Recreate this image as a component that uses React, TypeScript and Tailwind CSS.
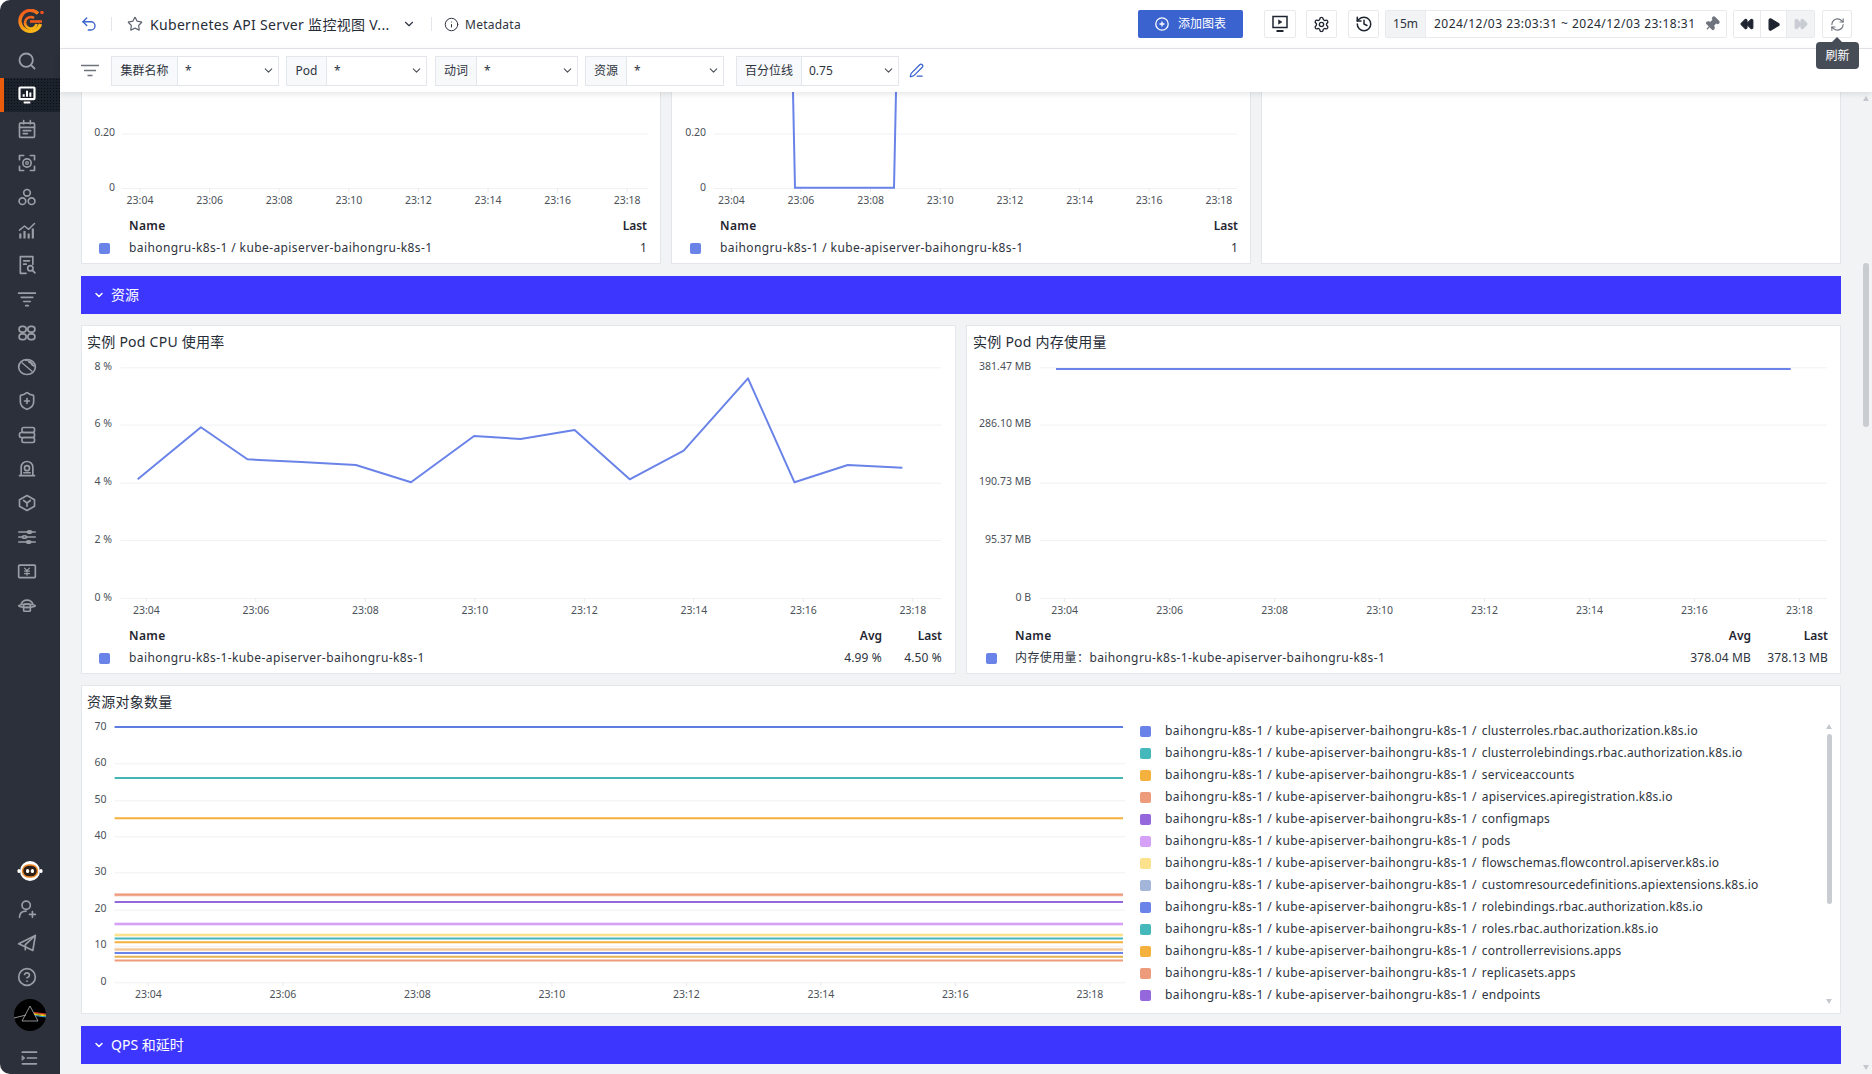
import { ChevronDown, CircleHelp, FastForward, History, Info, PenLine, Pin, Play, RefreshCw, Rewind, Search, Settings, ShieldPlus, Star, Undo2 } from "lucide-react";
import type { ReactNode } from "react";

const SERIES = "baihongru-k8s-1 / kube-apiserver-baihongru-k8s-1";

const RESOURCES = [
  ["bg-[#6a83e8]", "clusterroles.rbac.authorization.k8s.io"],
  ["bg-[#45b8bb]", "clusterrolebindings.rbac.authorization.k8s.io"],
  ["bg-[#f5b13d]", "serviceaccounts"],
  ["bg-[#ee9b7c]", "apiservices.apiregistration.k8s.io"],
  ["bg-[#9468dc]", "configmaps"],
  ["bg-[#d5a0f5]", "pods"],
  ["bg-[#fde28e]", "flowschemas.flowcontrol.apiserver.k8s.io"],
  ["bg-[#a3b5d8]", "customresourcedefinitions.apiextensions.k8s.io"],
  ["bg-[#6a83e8]", "rolebindings.rbac.authorization.k8s.io"],
  ["bg-[#45b8bb]", "roles.rbac.authorization.k8s.io"],
  ["bg-[#f5b13d]", "controllerrevisions.apps"],
  ["bg-[#ee9b7c]", "replicasets.apps"],
  ["bg-[#9468dc]", "endpoints"],
];

// resource chart lines: value, colour, soft halo
const RESOURCE_LINES: [number, string, boolean][] = [
  [70, "#5f7de0", false],
  [56, "#45b5b5", false],
  [45, "#f5b13d", false],
  [24, "#ee9b7c", true],
  [22, "#9468dc", false],
  [16, "#d5a0f5", true],
  [13, "#fde28e", true],
  [12, "#45b5c0", false],
  [11, "#f5b13d", false],
  [9, "#f3c79b", true],
  [8, "#6a83e8", false],
  [7, "#e6b24e", false],
  [6, "#ee9b7c", false],
];

const CPU_POINTS = [
  [118, 478], [228, 322], [309, 418], [403, 426], [498, 435], [594, 487], [704, 348], [785, 357],
  [879, 330], [975, 478], [1069, 392], [1181, 175], [1262, 487], [1355, 435], [1450, 443],
]
  .map(([x, y]) => `${(70 + x / 1.742).toFixed(1)},${(320 + y / 3).toFixed(1)}`)
  .join(" ");

const TIMES = ["23:04", "23:06", "23:08", "23:10", "23:12", "23:14", "23:16", "23:18"];

type AxisProps = {
  box: [number, number, number, number];
  gridFrom: number;
  gridTo: number;
  labelRight: number;
  rows: [number, string][];
  tick0: number;
  tickStep: number;
  labelY: number;
  children?: ReactNode;
};

function Axis({ box, gridFrom, gridTo, labelRight, rows, tick0, tickStep, labelY, children }: AxisProps) {
  const bottom = rows[rows.length - 1][0];
  return (
    <svg width={box[2]} height={box[3]} viewBox={box.join(" ")} className="shrink-0">
      {rows.map(([y, label]) => (
        <g key={label}>
          <line x1={gridFrom} x2={gridTo} y1={y + 0.5} y2={y + 0.5} stroke="#f0f1f3" />
          <text x={labelRight} y={y + 2.5} textAnchor="end" fontSize="10.5" fill="#4b5158">
            {label}
          </text>
        </g>
      ))}
      {TIMES.map((t, i) => {
        const x = tick0 + i * tickStep;
        return (
          <g key={t}>
            <line x1={x} x2={x} y1={bottom} y2={bottom + 4} stroke="#e8eaed" />
            <text x={x} y={labelY + 4} textAnchor="middle" fontSize="10.5" fill="#4b5158">
              {t}
            </text>
          </g>
        );
      })}
      {children}
    </svg>
  );
}

function LegendTable({ name, cols, pad, gap, colW }: { name: string; cols: [string, string][]; pad: string; gap: string; colW: string[] }) {
  return (
    <div className={`text-xs text-[#2e3440] ${pad}`}>
      <div className="flex h-[22px] items-center font-semibold text-[#1f2530]">
        <span className={`w-[11px] shrink-0 ${gap}`} />
        <span className="flex-1 tracking-[0.4px]">Name</span>
        {cols.map(([head], i) => (
          <span key={head} className={`text-right ${colW[i]}`}>
            {head}
          </span>
        ))}
      </div>
      <div className="flex h-[22px] items-center">
        <span className={`h-[11px] w-[11px] shrink-0 rounded-[2px] bg-[#6a83e8] ${gap}`} />
        <span className="flex-1 tracking-[0.4px] whitespace-nowrap">{name}</span>
        {cols.map(([head, value], i) => (
          <span key={head} className={`text-right tracking-[0.15px] ${colW[i]}`}>
            {value}
          </span>
        ))}
      </div>
    </div>
  );
}

function FilterSelect({ label, value, labelW, w, className }: { label: string; value: string; labelW: string; w: string; className?: string }) {
  return (
    <div className={`flex h-[30px] items-stretch border border-[#e3e6ea] bg-white text-xs text-[#2e3440] ${w} ${className ?? ""}`}>
      <span className={`flex shrink-0 items-center justify-center border-r border-[#e3e6ea] bg-[#f8f9fa] ${labelW}`}>{label}</span>
      <span className="flex flex-1 items-center justify-between pl-[7px] pr-[3px]">
        {value}
        <ChevronDown size={13} strokeWidth={2} className="text-[#4b5158]" />
      </span>
    </div>
  );
}

function IconBtn({ children, className }: { children: ReactNode; className?: string }) {
  return <div className={`flex h-7 items-center justify-center rounded-[2px] border border-[#e8eaed] bg-white ${className ?? ""}`}>{children}</div>;
}

function Section({ title }: { title: string }) {
  return (
    <div className="flex h-[38px] shrink-0 items-center bg-[#3d36ff] pl-[12px] text-sm text-white">
      <ChevronDown size={12} strokeWidth={3} />
      <span className="ml-[6px]">{title}</span>
    </div>
  );
}

function CardTitle({ children, pad }: { children: ReactNode; pad: string }) {
  return <div className={`h-[32px] text-sm leading-[32px] tracking-[0.25px] text-[#262c36] ${pad}`}>{children}</div>;
}

function Arrow({ down }: { down?: boolean }) {
  return (
    <svg width="6" height="6" viewBox="0 0 6 6" className="shrink-0">
      <path d={down ? "M0 1h6L3 6z" : "M0 5h6L3 0z"} fill="#c4c8ce" />
    </svg>
  );
}

function Glyph({ children, active }: { children: ReactNode; active?: boolean }) {
  return (
    <svg width="20" height="20" viewBox="0 0 24 24" fill="none" stroke="currentColor" strokeWidth="2" strokeLinecap="round" strokeLinejoin="round" className={active ? "text-white" : "text-[#9a9ea6]"}>
      {children}
    </svg>
  );
}

function Logo() {
  return (
    <svg width="28" height="26" viewBox="0 0 28 26" fill="none">
      <defs>
        <linearGradient id="logoG" x1="0" y1="0" x2="0.4" y2="1">
          <stop offset="0" stopColor="#f0501e" />
          <stop offset="1" stopColor="#fbb615" />
        </linearGradient>
      </defs>
      <path d="M21 4.5A10.5 10.5 0 1 0 23.5 15" stroke="url(#logoG)" strokeWidth="3.4" />
      <path d="M17 9a5.8 5.8 0 1 0 2.5 6" stroke="url(#logoG)" strokeWidth="2.6" />
      <path d="M13 12.5h12" stroke="#ef5a1c" strokeWidth="2.6" />
      <circle cx="25" cy="3.5" r="1.8" fill="#f0501e" />
    </svg>
  );
}

function SideItem({ children, active }: { children: ReactNode; active?: boolean }) {
  if (active) {
    return (
      <div className="flex h-[34px] items-center justify-center border-l-4 border-[#ea5b0c] bg-[#1c222c] bg-[radial-gradient(#0b0e13_1px,transparent_1px)] bg-[length:3px_3px] pr-[11px]">
        {children}
      </div>
    );
  }
  return <div className="flex h-[34px] items-center justify-center pr-[7px]">{children}</div>;
}

function Sidebar() {
  return (
    <aside className="flex h-full w-[60px] shrink-0 flex-col rounded-l-[10px] bg-[#2c303b]">
      <div className="flex h-[44px] items-center justify-center pl-[1px]">
        <Logo />
      </div>
      <SideItem>
        <Search size={20} strokeWidth={2.2} className="text-[#9a9ea6]" />
      </SideItem>
      <SideItem active>
        <Glyph active>
          <rect x="3" y="3" width="18" height="14" rx="1" strokeWidth="2.6" />
          <path d="M8 14v-3M12 14V7M16 14v-5M8 21h8" strokeWidth="2.4" strokeLinecap="butt" />
        </Glyph>
      </SideItem>
      <SideItem>
        <Glyph>
          <rect x="3" y="5" width="18" height="17" rx="1" />
          <path d="M8 2v4M16 2v4M3 10h18" />
          <path d="M7.5 14h9M7.5 17.5h5" />
        </Glyph>
      </SideItem>
      <SideItem>
        <Glyph>
          <path d="M3 8V3h5M16 3h5v5M21 16v5h-5M8 21H3v-5" />
          <circle cx="12" cy="12" r="5" />
          <circle cx="12" cy="12" r="1.6" strokeWidth="1.6" />
        </Glyph>
      </SideItem>
      <SideItem>
        <Glyph>
          <circle cx="12" cy="7" r="4" />
          <circle cx="6.5" cy="17" r="4" />
          <circle cx="17.5" cy="17" r="4" />
        </Glyph>
      </SideItem>
      <SideItem>
        <Glyph>
          <path d="M4 21v-6M9 21v-9M14 21v-6M19 21V9" strokeWidth="2.6" strokeLinecap="butt" />
          <path d="M3 11l6-5 5 4 7-7" strokeWidth="1.8" />
        </Glyph>
      </SideItem>
      <SideItem>
        <Glyph>
          <path d="M11 22H4V2h15v9" />
          <path d="M8 7h7M8 11h3" />
          <circle cx="16" cy="16" r="3.2" />
          <path d="M18.5 18.5L21.5 21.5" />
        </Glyph>
      </SideItem>
      <SideItem>
        <Glyph>
          <path d="M2 5h20M5 10h14M8 15h8M10.5 20h3" />
        </Glyph>
      </SideItem>
      <SideItem>
        <Glyph>
          <rect x="2.5" y="4" width="8.5" height="7" rx="3.5" />
          <rect x="13" y="4" width="8.5" height="7" rx="3.5" />
          <rect x="2.5" y="13" width="8.5" height="7" rx="3.5" />
          <rect x="13" y="13" width="8.5" height="7" rx="3.5" />
        </Glyph>
      </SideItem>
      <SideItem>
        <Glyph>
          <ellipse cx="12" cy="12" rx="10" ry="9" />
          <path d="M6 7l12 10M10 4c4 0 8 2 10 7M14 6c2 .5 3.5 2 4.5 4" strokeWidth="1.6" />
        </Glyph>
      </SideItem>
      <SideItem>
        <ShieldPlus size={20} strokeWidth={2} className="text-[#9a9ea6]" />
      </SideItem>
      <SideItem>
        <Glyph>
          <rect x="6" y="3" width="15" height="6" rx="2" />
          <rect x="3" y="9" width="18" height="6" rx="2" />
          <rect x="6" y="15" width="15" height="6" rx="2" />
        </Glyph>
      </SideItem>
      <SideItem>
        <Glyph>
          <path d="M5 19V10a7 7 0 0 1 14 0v9" />
          <path d="M3 20h18" />
          <circle cx="12" cy="11" r="3" />
          <path d="M8 16.5h8" strokeWidth="1.6" />
        </Glyph>
      </SideItem>
      <SideItem>
        <Glyph>
          <path d="M12 3l9 5v8l-9 5-9-5V8z" />
          <path d="M8 9l4 3 4-3M12 12v4" />
        </Glyph>
      </SideItem>
      <SideItem>
        <Glyph>
          <path d="M2 6h20M2 12h20M2 18h20" strokeWidth="1.6" />
          <ellipse cx="15" cy="6" rx="2.5" ry="1.5" fill="currentColor" />
          <ellipse cx="9" cy="12" rx="2.5" ry="1.5" fill="#2c303b" />
          <ellipse cx="14" cy="18" rx="2.5" ry="1.5" fill="currentColor" />
        </Glyph>
      </SideItem>
      <SideItem>
        <Glyph>
          <rect x="2" y="5" width="20" height="15" rx="1" />
          <path d="M9 8.5l3 3 3-3M9 12h6M9 15h6M12 11.5V17" strokeWidth="1.5" />
        </Glyph>
      </SideItem>
      <SideItem>
        <Glyph>
          <path d="M5 11a7.5 7.5 0 0 1 14 0" />
          <path d="M2 13c3-2.5 17-2.5 20 0-3 2.5-17 2.5-20 0z" />
          <rect x="8" y="11" width="8" height="8.5" rx="1" />
          <path d="M10.5 15h3" />
        </Glyph>
      </SideItem>
      <div className="mt-auto flex flex-col">
        <div className="mb-[4px] flex h-[34px] items-center justify-center">
          <svg width="26" height="20" viewBox="0 0 26 20">
            <ellipse cx="13" cy="10" rx="10" ry="10" fill="#fff" />
            <rect x="0.5" y="8" width="3" height="4" rx="1.5" fill="#fff" />
            <rect x="22.5" y="8" width="3" height="4" rx="1.5" fill="#fff" />
            <rect x="5.5" y="4" width="15" height="12" rx="6" fill="#2c1f18" stroke="#ee8a2d" strokeWidth="1.5" />
            <rect x="9" y="8" width="3.2" height="4" rx="1.5" fill="#fff" />
            <rect x="13.8" y="8" width="3.2" height="4" rx="1.5" fill="#fff" />
          </svg>
        </div>
        <SideItem>
          <Glyph>
            <circle cx="11" cy="7.5" r="5" />
            <path d="M3 22c0-4.5 3-7.5 8-7.5M15 18.5h7M18.5 15v7" />
          </Glyph>
        </SideItem>
        <SideItem>
          <Glyph>
            <path d="M2 13L22 3l-3 18-8-4z" />
            <path d="M22 3L10 14v6" />
          </Glyph>
        </SideItem>
        <SideItem>
          <CircleHelp size={20} strokeWidth={2} className="text-[#9a9ea6]" />
        </SideItem>
        <div className="flex h-[42px] items-center justify-center">
          <svg width="32" height="32" viewBox="0 0 32 32">
            <circle cx="16" cy="16" r="16" fill="#000" />
            <path d="M16 7L8 22h16z" fill="none" stroke="#aeb2b8" strokeWidth="0.8" />
            <path d="M0 19l12-3" stroke="#b5b5b5" strokeWidth="0.8" />
            <path d="M20 13.5L32 15" stroke="#e2322a" strokeWidth="1" />
            <path d="M20 14.5L32 16" stroke="#f5a623" strokeWidth="1" />
            <path d="M20.5 15.5L32 17" stroke="#f8e71c" strokeWidth="1" />
            <path d="M21 16.5L32 18" stroke="#3aa6dd" strokeWidth="1" />
          </svg>
        </div>
        <div className="mt-[5px] flex h-[33px] items-center justify-center pr-[3px]">
          <Glyph>
            <path d="M4 5h17M10 12h11M4 19h17" />
            <path d="M4 9.5l3 2.5-3 2.5z" fill="currentColor" strokeWidth="1" />
          </Glyph>
        </div>
      </div>
    </aside>
  );
}

function TopBar() {
  return (
    <header className="flex h-[49px] shrink-0 items-center border-b border-[#e3e6ea] bg-white text-[#2e3440]">
      <Undo2 size={18} strokeWidth={1.8} className="ml-[20px] text-[#3b63d0]" />
      <span className="ml-[13px] h-[14px] w-px bg-[#e3e6ea]" />
      <Star size={16} strokeWidth={1.8} className="ml-[15px] text-[#5f6670]" />
      <span className="mt-[1px] ml-[7px] w-[240px] text-sm tracking-[0.32px] whitespace-nowrap text-[#262c36]">Kubernetes API Server 监控视图 V...</span>
      <ChevronDown size={14} strokeWidth={2} className="ml-[12px]" />
      <span className="ml-[15px] h-[14px] w-px bg-[#e3e6ea]" />
      <Info size={15} strokeWidth={1.6} className="ml-[12px]" />
      <span className="mt-[1px] ml-[6px] text-xs tracking-[0.25px]">Metadata</span>
      <div className="ml-auto flex items-center pr-[20px] text-xs">
        <div className="flex h-7 w-[105px] items-center justify-center gap-[9px] rounded-[2px] bg-[#3b63d0] text-white">
          <svg width="14" height="14" viewBox="0 0 14 14" fill="none" stroke="currentColor" strokeWidth="1.3">
            <circle cx="7" cy="7" r="6.2" />
            <path d="M7 4.5v5M4.5 7h5" />
          </svg>
          添加图表
        </div>
        <IconBtn className="ml-[21px] w-8">
          <svg width="18" height="18" viewBox="0 0 18 18" fill="none" stroke="#1f2530" strokeWidth="1.5">
            <rect x="2" y="1.5" width="14" height="11" />
            <path d="M7.5 4.8l3.5 2.2-3.5 2.2z" fill="#1f2530" strokeWidth="0.5" />
            <path d="M5.5 16h7" strokeWidth="2" />
          </svg>
        </IconBtn>
        <IconBtn className="ml-[10px] w-[31px]">
          <Settings size={17} strokeWidth={1.9} className="text-[#1f2530]" />
        </IconBtn>
        <IconBtn className="ml-[11px] w-[31px]">
          <History size={18} strokeWidth={2} className="text-[#1f2530]" />
        </IconBtn>
        <div className="ml-[6px] flex h-7 w-[342px] items-center rounded-[2px] border border-[#e8eaed] bg-white">
          <span className="flex h-full w-[40px] items-center justify-center border-r border-[#e8eaed] bg-[#f1f3f5]">15m</span>
          <span className="ml-[8px] tracking-[0.47px] whitespace-nowrap text-[#262c36]">2024/12/03 23:03:31 ~ 2024/12/03 23:18:31</span>
          <Pin size={16} fill="currentColor" className="ml-auto mr-[6px] rotate-45 text-[#6f747c]" />
        </div>
        <div className="ml-[6px] flex h-7 w-[82px] items-stretch rounded-[2px] border border-[#e8eaed] bg-white">
          <span className="flex w-[27px] items-center justify-center border-r border-[#e8eaed]">
            <Rewind size={14} fill="currentColor" className="text-[#1f2530]" />
          </span>
          <span className="flex w-[26px] items-center justify-center border-r border-[#e8eaed]">
            <Play size={15} fill="currentColor" className="text-[#1f2530]" />
          </span>
          <span className="flex flex-1 items-center justify-center bg-[#f1f3f5]">
            <FastForward size={14} fill="currentColor" className="text-[#c9cdd3]" />
          </span>
        </div>
        <div className="relative ml-[7px]">
          <IconBtn className="w-[30px]">
            <RefreshCw size={15} strokeWidth={1.8} className="text-[#6f747c]" />
          </IconBtn>
          <div className="absolute top-[32px] left-[-6px] z-20 flex h-[27px] w-[43px] items-center justify-center rounded-[4px] bg-[#474d57] text-xs text-white">
            <span className="absolute top-[-5px] left-[16px] h-0 w-0 border-x-[5px] border-b-[5px] border-x-transparent border-b-[#474d57]" />
            刷新
          </div>
        </div>
      </div>
    </header>
  );
}

function FilterBar() {
  return (
    <div className="relative z-10 flex h-[43px] shrink-0 items-center bg-white pl-[21px] shadow-[0_2px_6px_rgba(0,0,0,0.1)]">
      <svg width="18" height="14" viewBox="0 0 18 14" fill="none" stroke="#6f747c" strokeWidth="1.6">
        <path d="M0 1.5h18M3 6.5h12M6.5 11.5h5" />
      </svg>
      <FilterSelect label="集群名称" value="*" labelW="w-[66px]" w="w-[168px]" className="ml-[12px]" />
      <FilterSelect label="Pod" value="*" labelW="w-[40px]" w="w-[141px]" className="ml-[7px]" />
      <FilterSelect label="动词" value="*" labelW="w-[41px]" w="w-[143px]" className="ml-[8px]" />
      <FilterSelect label="资源" value="*" labelW="w-[41px]" w="w-[139px]" className="ml-[7px]" />
      <FilterSelect label="百分位线" value="0.75" labelW="w-[65px]" w="w-[163px]" className="ml-[12px]" />
      <PenLine size={15} strokeWidth={2} className="ml-[10px] text-[#3b63d0]" />
    </div>
  );
}

function Dashboard() {
  const card = "min-w-0 border border-[#e3e6ea] bg-white";
  return (
    <div className="flex w-[1760px] shrink-0 flex-col">
      <div className="grid h-[172px] shrink-0 grid-cols-[580px_580px_580px] gap-[10px]">
        <div className={`${card} border-t-0`}>
          <Axis box={[82, 92, 578, 116]} gridFrom={122} gridTo={648} labelRight={115} rows={[[133.5, "0.20"], [188, "0"]]} tick0={140} tickStep={69.6} labelY={200} />
          <div className="mt-[7px]">
            <LegendTable name={SERIES} cols={[["Last", "1"]]} colW={["w-[40px]"]} pad="pl-[17px] pr-[13px]" gap="mr-[19px]" />
          </div>
        </div>
        <div className={`${card} border-t-0`}>
          <Axis box={[672, 92, 578, 116]} gridFrom={714} gridTo={1237} labelRight={706} rows={[[133.5, "0.20"], [188, "0"]]} tick0={731.3} tickStep={69.65} labelY={200}>
            <polyline points="793,92 795,187.7 894,187.7 896,92" fill="none" stroke="#6a83e8" strokeWidth="2" />
          </Axis>
          <div className="mt-[7px]">
            <LegendTable name={SERIES} cols={[["Last", "1"]]} colW={["w-[40px]"]} pad="pl-[18px] pr-[12px]" gap="mr-[19px]" />
          </div>
        </div>
        <div className={`${card} border-t-0`} />
      </div>

      <div className="mt-[12px]">
        <Section title="资源" />
      </div>

      <div className="mt-[11px] grid h-[349px] shrink-0 grid-cols-[875px_875px] gap-[10px]">
        <div className={card}>
          <CardTitle pad="pl-[5px]">实例 Pod CPU 使用率</CardTitle>
          <Axis
            box={[82, 358, 873, 264]}
            gridFrom={120.5}
            gridTo={941}
            labelRight={112}
            rows={[[367.3, "8 %"], [424.6, "6 %"], [482.7, "4 %"], [540, "2 %"], [598, "0 %"]]}
            tick0={146.3}
            tickStep={109.5}
            labelY={610}
          >
            <polyline points={CPU_POINTS} fill="none" stroke="#6a83e8" strokeWidth="2" strokeLinejoin="round" />
          </Axis>
          <div className="mt-[3px]">
            <LegendTable name="baihongru-k8s-1-kube-apiserver-baihongru-k8s-1" cols={[["Avg", "4.99 %"], ["Last", "4.50 %"]]} colW={["w-[60px]", "w-[60px]"]} pad="pl-[17px] pr-[13px]" gap="mr-[19px]" />
          </div>
        </div>
        <div className={card}>
          <CardTitle pad="pl-[6px]">实例 Pod 内存使用量</CardTitle>
          <Axis
            box={[967, 358, 873, 264]}
            gridFrom={1039.7}
            gridTo={1827}
            labelRight={1031}
            rows={[[367.3, "381.47 MB"], [424.6, "286.10 MB"], [482.7, "190.73 MB"], [540, "95.37 MB"], [598, "0 B"]]}
            tick0={1064.7}
            tickStep={104.96}
            labelY={610}
          >
            <line x1={1056} x2={1790.7} y1={369} y2={369} stroke="#6a83e8" strokeWidth="2" />
          </Axis>
          <div className="mt-[3px]">
            <LegendTable name="内存使用量：baihongru-k8s-1-kube-apiserver-baihongru-k8s-1" cols={[["Avg", "378.04 MB"], ["Last", "378.13 MB"]]} colW={["w-[70px]", "w-[77px]"]} pad="pl-[19px] pr-[12px]" gap="mr-[18px]" />
          </div>
        </div>
      </div>

      <div className={`${card} mt-[11px] h-[329px] shrink-0`}>
        <CardTitle pad="pl-[5px]">资源对象数量</CardTitle>
        <div className="flex">
          <Axis
            box={[82, 718, 1048, 287]}
            gridFrom={114.6}
            gridTo={1125}
            labelRight={106.5}
            rows={[[727, "70"], [763.3, "60"], [800.3, "50"], [836.3, "40"], [872.3, "30"], [909.7, "20"], [945.7, "10"], [982.3, "0"]]}
            tick0={148.4}
            tickStep={134.5}
            labelY={994}
          >
            {RESOURCE_LINES.map(([v, color, halo]) => {
              const y = 982.3 - v * 3.647;
              return (
                <g key={v}>
                  {halo && <line x1={114.6} x2={1123} y1={y} y2={y} stroke={color} strokeWidth="3.5" opacity="0.4" />}
                  <line x1={114.6} x2={1123} y1={y} y2={y} stroke={color} strokeWidth="2" />
                </g>
              );
            })}
          </Axis>
          <div className="flex-1 pt-[2px] pl-[10px]">
            {RESOURCES.map(([color, name]) => (
              <div key={name} className="flex h-[22px] items-center text-xs whitespace-nowrap text-[#2e3440]">
                <span className={`h-[11px] w-[11px] shrink-0 rounded-[2px] ${color}`} />
                <span className="ml-[14px] tracking-[0.4px]">{SERIES} /</span>
                <span className="ml-[5px] tracking-[0.2px]">{name}</span>
              </div>
            ))}
          </div>
          <div className="mr-[8px] flex w-[6px] shrink-0 flex-col items-center pt-[6px]">
            <Arrow />
            <div className="mt-[4px] h-[170px] w-[5px] rounded-full bg-[#c9cdd2]" />
            <div className="mt-auto mb-[2px]">
              <Arrow down />
            </div>
          </div>
        </div>
      </div>

      <div className="mt-[12px]">
        <Section title="QPS 和延时" />
      </div>
    </div>
  );
}

export default function App() {
  return (
    <div className="flex h-[1074px] w-[1872px] overflow-hidden bg-white text-[#2e3440] [font-family:'Noto_Sans','Noto_Sans_CJK_SC',sans-serif]">
      <Sidebar />
      <main className="flex h-full min-w-0 flex-1 flex-col bg-[#f1f3f5]">
        <TopBar />
        <FilterBar />
        <div className="flex min-h-0 flex-1 pl-[21px]">
          <Dashboard />
          <div className="flex w-[31px] shrink-0 flex-col items-end pt-[4px] pr-[3px] pb-[4px]">
            <Arrow />
            <div className="mt-[161px] h-[164px] w-[6px] rounded-full bg-[#c9cdd2]" />
            <div className="mt-auto">
              <Arrow down />
            </div>
          </div>
        </div>
      </main>
    </div>
  );
}
